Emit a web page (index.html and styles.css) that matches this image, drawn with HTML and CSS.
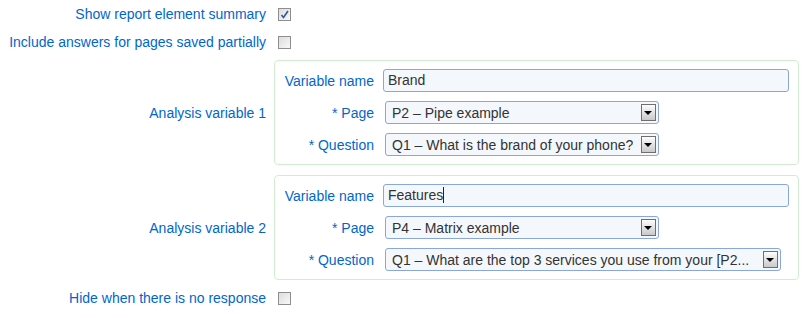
FILE: index.html
```html
<!DOCTYPE html>
<html lang="en">
<head>
    <meta charset="UTF-8">
    <title>Report element settings</title>
    <link rel="stylesheet" href="styles.css">
</head>
<body>
    <div class="settings">
        <div class="row">
            <label class="label">Show report element summary</label>
            <span class="check checked">
                <svg width="11" height="11" viewBox="0 0 11 11"><path d="M2.5 6 L4.5 8.5 L9 2" fill="none" stroke="#3352a8" stroke-width="1.6"/></svg>
            </span>
        </div>
        <div class="row">
            <label class="label">Include answers for pages saved partially</label>
            <span class="check"></span>
        </div>

        <div class="row group-row">
            <div class="label">Analysis variable 1</div>
            <div class="group">
                <label class="field-label">Variable name</label>
                <div class="text-input">Brand</div>
                <label class="field-label">* Page</label>
                <div class="select">
                    <span class="select-text">P2 – Pipe example</span>
                    <span class="select-btn"></span>
                </div>
                <label class="field-label">* Question</label>
                <div class="select">
                    <span class="select-text">Q1 – What is the brand of your phone?</span>
                    <span class="select-btn"></span>
                </div>
            </div>
        </div>

        <div class="row group-row second">
            <div class="label">Analysis variable 2</div>
            <div class="group">
                <label class="field-label">Variable name</label>
                <div class="text-input">Features<span class="caret"></span></div>
                <label class="field-label">* Page</label>
                <div class="select">
                    <span class="select-text">P4 – Matrix example</span>
                    <span class="select-btn"></span>
                </div>
                <label class="field-label">* Question</label>
                <div class="select wide">
                    <span class="select-text">Q1 – What are the top 3 services you use from your [P2...</span>
                    <span class="select-btn"></span>
                </div>
            </div>
        </div>

        <div class="row last">
            <label class="label">Hide when there is no response</label>
            <span class="check"></span>
        </div>
    </div>
</body>
</html>
```

FILE: styles.css
```css
body {
    margin: 0;
    font-family: 'Liberation Sans', Arial, sans-serif;
    font-size: 14px;
    color: #333;
    background: #fff;
}

.settings {
    width: 807px;
}

.row {
    display: grid;
    grid-template-columns: 266px 1fr;
    column-gap: 12px;
    align-items: center;
    height: 28px;
}

.label {
    text-align: right;
    color: #0066cc;
    white-space: nowrap;
}

.check {
    width: 11px;
    height: 11px;
    border: 1px solid #8e8e8e;
    background: linear-gradient(135deg, #dcdcdc, #f8f8f8);
    display: flex;
    align-items: center;
    justify-content: center;
}

.group-row {
    height: auto;
    margin-top: 4px;
    column-gap: 8px;
}

.group-row.second {
    margin-top: 10px;
}

.row.last {
    margin-top: 4px;
}

.group {
    width: 505px;
    border: 1px solid #d2ecd2;
    border-radius: 4px;
    padding: 8px 9px;
    display: grid;
    grid-template-columns: 90px 1fr;
    column-gap: 9px;
    row-gap: 9px;
    align-items: center;
}

.field-label {
    text-align: right;
    color: #0066cc;
    white-space: nowrap;
}

.text-input {
    height: 21px;
    line-height: 21px;
    padding: 0 4px;
    border: 1px solid #89a7dc;
    border-radius: 3px;
    background: #f4f8fc;
    color: #333;
}

.caret {
    display: inline-block;
    width: 1px;
    height: 16px;
    background: #222;
    vertical-align: -3px;
}

.select {
    width: 266px;
    height: 21px;
    margin-left: 2px;
    padding-left: 6px;
    border: 1px solid #89a7dc;
    border-radius: 3px;
    background: #f4f8fc;
    display: flex;
    align-items: center;
    justify-content: space-between;
}

.select.wide {
    width: 388px;
}

.select-text {
    white-space: nowrap;
    overflow: hidden;
    color: #333;
}

.select-btn {
    flex: none;
    width: 13px;
    height: 15px;
    margin-right: 2px;
    margin-left: 4px;
    border: 1px solid #6f6f6f;
    background: linear-gradient(#fdfdfd, #c9c9c9);
    position: relative;
}

.select-btn::after {
    content: "";
    position: absolute;
    left: 2px;
    top: 6px;
    border-left: 4px solid transparent;
    border-right: 4px solid transparent;
    border-top: 4px solid #000;
}
```
